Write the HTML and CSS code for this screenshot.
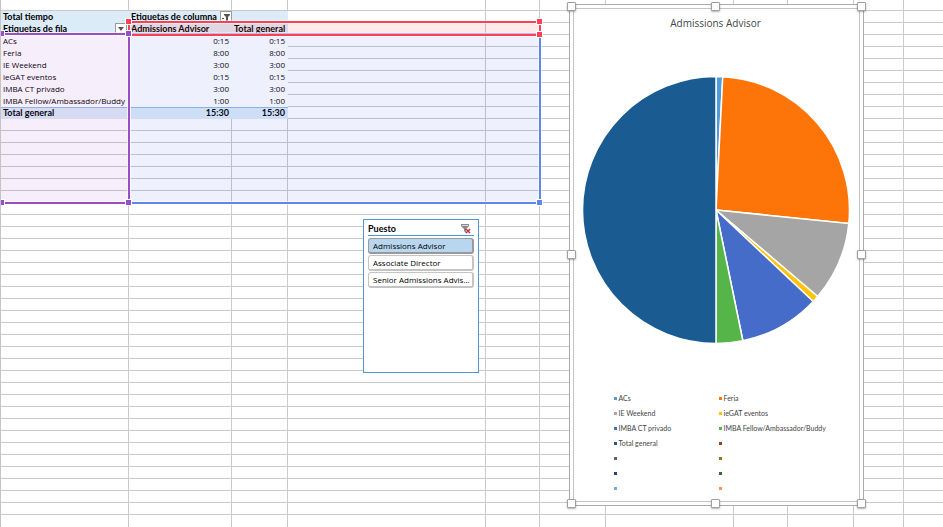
FILE: index.html
```html
<!DOCTYPE html>
<html lang="es">
<head>
<meta charset="utf-8">
<title>Total tiempo</title>
<link rel="stylesheet" href="styles.css">
</head>
<body>
<main class="sheet">
  <div class="columns" aria-hidden="true">
    <i></i><i></i><i></i><i></i><i></i><i></i><i></i><i></i><i></i><i></i><i></i>
  </div>

  <table class="pivot">
    <colgroup><col class="col-a"><col class="col-b"><col class="col-c"></colgroup>
    <thead>
      <tr>
        <th>Total tiempo</th>
        <th colspan="2"><span class="head">Etiquetas de columna
          <button class="filter" type="button" aria-label="Filtrar columnas"><svg viewBox="0 0 10 10"><path d="M1 6h2v1H1zM3 2h6v1L7 5v4H5V5L3 3z"/></svg></button></span></th>
      </tr>
      <tr>
        <th><span class="head spread">Etiquetas de fila
          <button class="filter" type="button" aria-label="Filtrar filas"><svg viewBox="0 0 10 10"><path d="M2 3h6L5 7z"/></svg></button></span></th>
        <th>Admissions Advisor</th>
        <th class="num">Total general</th>
      </tr>
    </thead>
    <tbody>
      <tr><td>ACs</td><td class="num">0:15</td><td class="num">0:15</td></tr>
      <tr><td>Feria</td><td class="num">8:00</td><td class="num">8:00</td></tr>
      <tr><td>IE Weekend</td><td class="num">3:00</td><td class="num">3:00</td></tr>
      <tr><td>ieGAT eventos</td><td class="num">0:15</td><td class="num">0:15</td></tr>
      <tr><td>IMBA CT privado</td><td class="num">3:00</td><td class="num">3:00</td></tr>
      <tr><td>IMBA Fellow/Ambassador/Buddy</td><td class="num">1:00</td><td class="num">1:00</td></tr>
    </tbody>
    <tfoot>
      <tr><th>Total general</th><td class="num">15:30</td><td class="num">15:30</td></tr>
    </tfoot>
  </table>

  <div class="range values"><b class="se"></b></div>
  <div class="range series"><b class="nw"></b><b class="ne"></b><b class="se"></b></div>
  <div class="range labels"><b class="nw"></b><b class="ne"></b><b class="sw"></b><b class="se"></b></div>

  <section class="slicer">
    <header>
      <h2>Puesto</h2>
      <button class="clear" type="button" aria-label="Borrar filtro">
        <svg viewBox="0 0 10 10"><path d="M0 0h8v2L5 5v4L3 7V5L0 2z" fill="#888"/><path d="M1 1.500h6" stroke="#ddd"/><path d="M5 5l4 4M9 5L5 9" stroke="#cf2b3c" stroke-width="1.500"/></svg>
      </button>
    </header>
    <button class="item on" type="button">Admissions Advisor</button>
    <button class="item" type="button">Associate Director</button>
    <button class="item" type="button">Senior Admissions Advis...</button>
  </section>

  <section class="chart">
    <div class="plot">
      <h2>Admissions Advisor</h2>
      <svg class="pie" viewBox="-134 -134 268 268" role="img" aria-label="Admissions Advisor">
        <g stroke="#fff" stroke-width="1.500" stroke-linejoin="round">
          <path fill="#4f9bd9" d="M0 0L0-133.500A133.500 133.500 0 0 1 6.760-133.330Z"/>
          <path fill="#fd7508" d="M0 0L6.760-133.330A133.500 133.500 0 0 1 132.820 13.500Z"/>
          <path fill="#a5a5a5" d="M0 0L132.820 13.500A133.500 133.500 0 0 1 101.720 86.460Z"/>
          <path fill="#ffc30b" d="M0 0L101.720 86.460A133.500 133.500 0 0 1 97.210 91.500Z"/>
          <path fill="#456cc8" d="M0 0L97.210 91.500A133.500 133.500 0 0 1 26.860 130.770Z"/>
          <path fill="#55b548" d="M0 0L26.860 130.770A133.500 133.500 0 0 1 0 133.500Z"/>
          <path fill="#1a5c92" d="M0 0L0 133.500A133.500 133.500 0 0 1 0-133.500Z"/>
        </g>
      </svg>
      <ul class="legend">
        <li class="k1">ACs</li><li class="k2">Feria</li>
        <li class="k3">IE Weekend</li><li class="k4">ieGAT eventos</li>
        <li class="k5">IMBA CT privado</li><li class="k6">IMBA Fellow/Ambassador/Buddy</li>
        <li class="k7">Total general</li><li class="k8"></li>
        <li class="k9"></li><li class="k10"></li>
        <li class="k11"></li><li class="k12"></li>
        <li class="k13"></li><li class="k14"></li>
      </ul>
    </div>
    <b class="grip nw"></b><b class="grip n"></b><b class="grip ne"></b><b class="grip w"></b><b class="grip e"></b><b class="grip sw"></b><b class="grip s"></b><b class="grip se"></b>
  </section>
</main>
</body>
</html>
```
FILE: styles.css
```css
* { box-sizing: border-box; }
body { margin: 0; background: #fff; color: #000; font: 8px/12px "Open Sans", "Noto Sans", sans-serif; }
h2 { margin: 0; }
button { margin: 0; padding: 0; font: inherit; color: inherit; }

.sheet {
  position: relative;
  min-height: 100vh;
  padding-top: 11px;
  overflow: hidden;
  border-left: 1px solid #c4c4c4;
  background: repeating-linear-gradient(#fff 0 11px, #c9c9c9 11px 12px) 0 -1px;
}
.columns {
  position: absolute;
  inset: 0;
  display: grid;
  grid-template-columns: 128px 103px 56px 198px 54px 66px 128px 54px 66px 50px 1fr;
}
.columns i { border-right: 1px solid #c9c9c9; }
.columns i:last-child { border-right: 0; }

/* Pivot table */
.pivot { position: relative; width: 287px; table-layout: fixed; border-collapse: collapse; background: #fff; }
.col-a { width: 128px; }
.col-b { width: 103px; }
.col-c { width: 56px; }
.pivot th, .pivot td { height: 12px; padding: 0 2px; text-align: left; white-space: nowrap; line-height: 12px; }
.pivot .num { padding-right: 3px; text-align: right; }
.pivot thead, .pivot tfoot { font-family: Lato, sans-serif; font-size: 9px; font-weight: 700; background: #dbebf7; }
.pivot tfoot { box-shadow: inset 0 1px #8fbbe6; }
.head { display: flex; height: 12px; gap: 3px; }
.spread { justify-content: space-between; }
.filter { width: 12px; height: 12px; border: 1px solid #9a9a9a; background: #fff; }
.filter svg { display: block; fill: #555; }

/* Highlighted ranges that feed the chart */
.range { position: absolute; border: 2px solid; box-shadow: 0 0 0 1px rgba(255, 255, 255, .5), inset 0 0 0 1px rgba(255, 255, 255, .5); }
.range b { position: absolute; width: 7px; height: 7px; border: 1px solid #fff; }
.nw, .n, .ne { top: -5px; }
.sw, .s, .se { bottom: -4px; }
.nw, .w, .sw { left: -5px; }
.ne, .e, .se { right: -4px; }
.values { left: 127px; top: 33px; width: 413px; height: 171px; border-color: #5f86ea; background: rgba(90, 110, 245, .1); }
.values b { background: #5f86ea; }
.series { left: 127px; top: 21px; width: 413px; height: 15px; border-color: #fb4058; background: rgba(251, 64, 64, .11); }
.series b { background: #fb4058; }
.labels { left: -1px; top: 33px; width: 130px; height: 171px; border-color: #984fc6; border-left: 0; background: rgba(152, 70, 205, .09); }
.labels b { background: #984fc6; }
.labels .nw, .labels .sw { left: -2px; }

/* Slicer */
.slicer {
  position: absolute;
  left: 362px;
  top: 219px;
  width: 116px;
  height: 154px;
  padding: 2px 4px;
  display: flex;
  flex-direction: column;
  gap: 1px;
  border: 1px solid #4e97d3;
  background: #fff;
}
.slicer header { display: flex; justify-content: space-between; align-items: center; height: 14px; margin-bottom: 1px; border-bottom: 1px solid #4e97d3; }
.slicer h2 { font: 700 9px/12px Lato, sans-serif; }
.clear { width: 10px; height: 10px; margin-right: 3px; border: 0; background: none; }
.clear svg { display: block; }
.item { height: 16px; padding: 0 4px; text-align: left; white-space: nowrap; border: 1px solid #c4c4c4; border-right-width: 2px; border-bottom-width: 2px; border-radius: 3px; background: #fff; }
.item.on { border-color: #999; background: #b8d6f0; }

/* Chart */
.chart { position: absolute; left: 568px; top: 4px; width: 295px; height: 502px; border: 1px solid #ababab; background: #fff; padding: 3px; }
.plot { height: 100%; border: 1px solid #c4c4c4; display: flex; flex-direction: column; align-items: center; padding: 6px 2px 0 0; }
.plot h2 { font-size: 10px; line-height: 16px; font-weight: 400; color: #444; }
.pie { width: 268px; height: 268px; margin-top: 45px; flex: none; }
.legend { list-style: none; margin: 47px 0 0; padding: 0; width: 204px; display: grid; grid-template-columns: 105px auto; grid-auto-rows: 15px; font: 7px/15px Lato, sans-serif; color: #444; }
.legend li { display: flex; align-items: center; gap: 2px; white-space: nowrap; }
.legend li::before { content: ""; width: 3px; height: 3px; background: var(--key); }
.k1 { --key: #4f9bd9; } .k2 { --key: #fd7508; } .k3 { --key: #a5a5a5; } .k4 { --key: #ffc30b; }
.k5 { --key: #456cc8; } .k6 { --key: #55b548; } .k7 { --key: #1a5c92; } .k8 { --key: #9e4010; }
.k9 { --key: #636363; } .k10 { --key: #987308; } .k11 { --key: #264081; } .k12 { --key: #336b2b; }
.k13 { --key: #77a9dd; } .k14 { --key: #fa955c; }
.grip { position: absolute; width: 9px; height: 9px; border: 1px solid #a0a0a0; border-radius: 1px; background: #fff; box-shadow: 0 1px 2px rgba(0, 0, 0, .3); }
.grip.nw, .grip.n, .grip.ne { top: -3px; }
.grip.sw, .grip.s, .grip.se { bottom: -3px; }
.grip.nw, .grip.w, .grip.sw { left: -3px; }
.grip.ne, .grip.e, .grip.se { right: -3px; }
.grip.n, .grip.s { left: calc(50% - 6px); }
.grip.w, .grip.e { top: calc(50% - 5px); }
```
